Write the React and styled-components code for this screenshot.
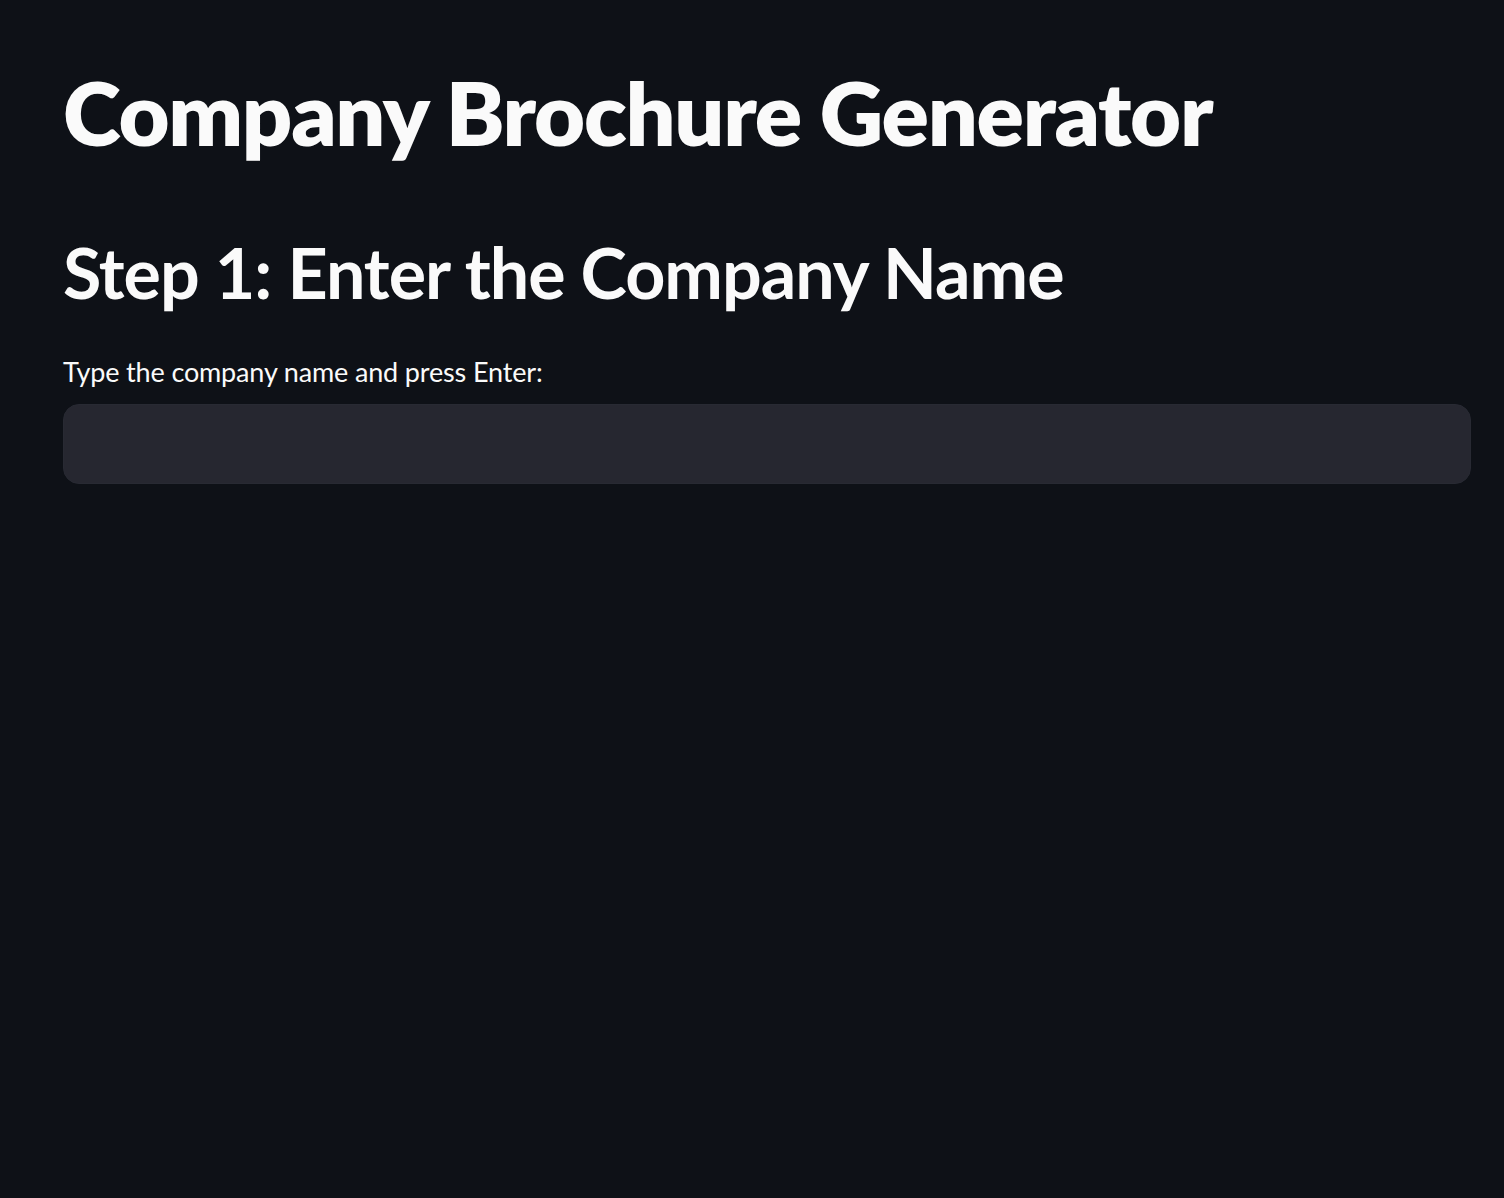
import React from "react";
import styled, { createGlobalStyle } from "styled-components";

const Global = createGlobalStyle`
  html, body { margin: 0; padding: 0; background: #0e1117; }
  body { font-family: Lato, "Noto Sans", sans-serif; color: #fafafa; }
  * { box-sizing: border-box; }
`;

const Page = styled.main`
  min-height: 1198px;
  background: #0e1117;
  padding: 52px 33px 0 63px;
`;

const Title = styled.h1`
  margin: 0;
  font-size: 88px;
  font-weight: 800;
  line-height: 120px;
  letter-spacing: -1.3px;
`;

const Heading = styled.h2`
  margin: 55px 0 0;
  font-size: 70px;
  font-weight: 700;
  line-height: 90px;
  letter-spacing: -1px;
`;

const Label = styled.label`
  display: block;
  margin-top: 37px;
  font-size: 27px;
  line-height: 36px;
  font-weight: 400;
  letter-spacing: -0.15px;
`;

const Input = styled.input`
  display: block;
  width: 100%;
  height: 80px;
  margin-top: 14px;
  background: #262730;
  border: 1px solid #282a33;
  border-radius: 16px;
  color: #fafafa;
  font-family: inherit;
  font-size: 28px;
  padding: 0 24px;
  outline: none;
`;

export default function App() {
  return (
    <>
      <Global />
      <Page>
        <Title>Company Brochure Generator</Title>
        <Heading>Step 1: Enter the Company Name</Heading>
        <Label htmlFor="company">Type the company name and press Enter:</Label>
        <Input id="company" type="text" />
      </Page>
    </>
  );
}
